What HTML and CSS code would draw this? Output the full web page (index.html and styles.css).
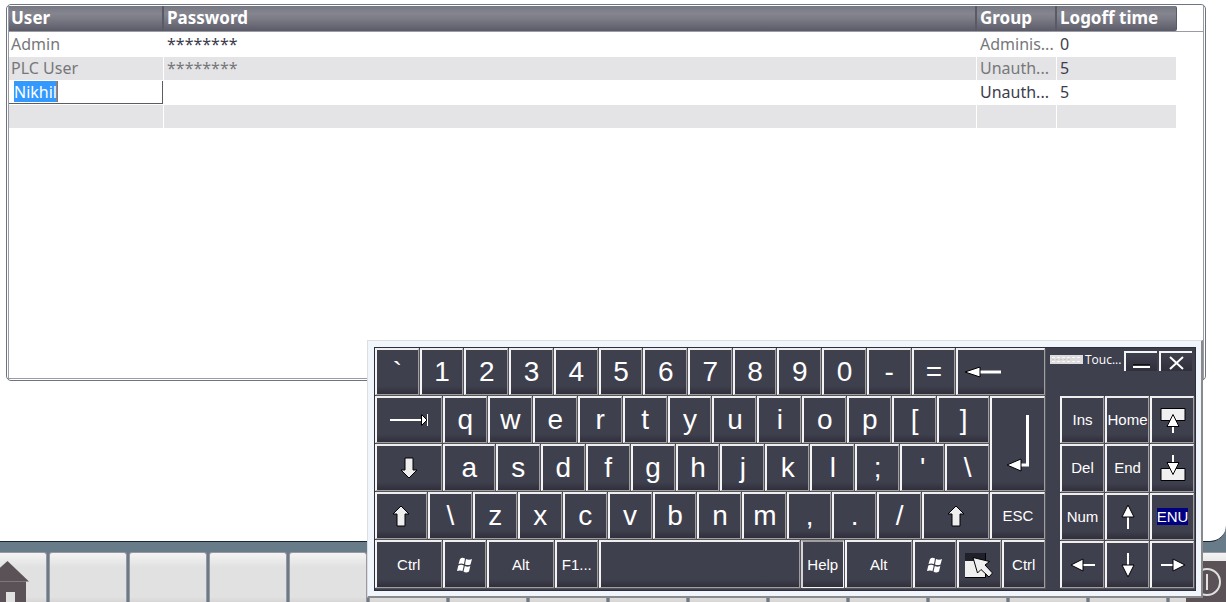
FILE: index.html
```html
<!DOCTYPE html>
<html lang="en">
<head>
<meta charset="utf-8">
<title>User administration</title>
<link rel="stylesheet" href="styles.css">
</head>
<body>
<main class="screen">
  <section class="panel" aria-label="Users">
    <div class="pane">
    <table class="users">
      <colgroup><col class="c-user"><col><col class="c-group"><col class="c-time"></colgroup>
      <thead><tr><th>User</th><th>Password</th><th>Group</th><th>Logoff time</th></tr></thead>
      <tbody>
        <tr class="muted"><td>Admin</td><td class="dark">********</td><td>Adminis...</td><td class="dark">0</td></tr>
        <tr class="muted alt"><td>PLC User</td><td>********</td><td>Unauth...</td><td class="dark">5</td></tr>
        <tr><td class="editing"><div class="edit" contenteditable="true" role="textbox" aria-label="User name"><span class="selected">Nikhil</span></div></td><td></td><td>Unauth...</td><td>5</td></tr>
        <tr class="alt"><td></td><td></td><td></td><td></td></tr>
      </tbody>
    </table>
    </div>
  </section>
</main>

<nav class="taskbar" aria-label="Screens">
  <button class="task first" aria-label="Home"><svg width="76" height="49" viewBox="0 0 76 49"><path d="M15 28.500 37.500 8 59 28.500Z" fill="#5a5256"/><path d="M18 28H56V49H18Z" fill="#5a5256"/><path d="M18 28.500H56" stroke="#7d777a"/><path d="M36 39H45V49H36Z" fill="#e1e1e1"/></svg></button>
  <button class="task" aria-label="Screen 2"></button><button class="task" aria-label="Screen 3"></button><button class="task" aria-label="Screen 4"></button><button class="task" aria-label="Screen 5"></button><button class="task" aria-label="Screen 6"></button><button class="task" aria-label="Screen 7"></button><button class="task" aria-label="Screen 8"></button><button class="task" aria-label="Screen 9"></button><button class="task" aria-label="Screen 10"></button><button class="task" aria-label="Screen 11"></button><button class="task" aria-label="Screen 12"></button><button class="task" aria-label="Screen 13"></button><button class="task" aria-label="Screen 14"></button><button class="task" aria-label="Screen 15"></button>
  <button class="task" aria-label="Exit"><svg width="76" height="49" viewBox="0 0 76 49"><path d="M16 8H60V49H16Z" fill="#5a5256"/><circle cx="37" cy="29" r="13" fill="none" stroke="#e1e1e1" stroke-width="2"/><path d="M37 21V37" stroke="#e1e1e1" stroke-width="2"/></svg></button>
</nav>

<svg class="defs" aria-hidden="true">
  <symbol id="shift" viewBox="0 0 18 22"><path d="M9 1 17 9H13V21H5V9H1Z" fill="#eee" stroke="#000"/></symbol>
  <symbol id="win" viewBox="0 0 16 16"><path d="M3 2Q5 0 8 1.500L7 7Q4 6 1.500 7ZM9 2Q12 3.500 15 2L13.500 7.500Q11 8.500 8 7.500ZM1.300 8.500Q4 7 6.800 8.500L5.500 14Q3 13 0 14ZM7.800 9Q10.500 10.500 13.300 9L12 14.500Q9 16.500 6.500 14.500Z" fill="#fff"/></symbol>
  <symbol id="arrow" viewBox="0 0 26 14"><path d="M11 7H25" stroke="#fff" stroke-width="2"/><path d="M1 7 13 1V13Z" fill="#fff" stroke="#000"/></symbol>
</svg>

<section class="keyboard" aria-label="Touch keyboard">
  <div class="board">
    <div class="keys">
      <div class="row">
        <button class="key">`</button><button class="key">1</button><button class="key">2</button><button class="key">3</button><button class="key">4</button><button class="key">5</button><button class="key">6</button><button class="key">7</button><button class="key">8</button><button class="key">9</button><button class="key">0</button><button class="key">-</button><button class="key">=</button>
        <button class="key back" aria-label="Backspace"><svg width="38" height="14" viewBox="0 0 38 14"><path d="M14 7H37" stroke="#fff" stroke-width="3"/><path d="M1 7 16 2V12Z" fill="#fff" stroke="#000"/></svg></button>
      </div>
      <div class="double">
        <div class="stack">
          <div class="row">
            <button class="key wide" aria-label="Tab"><svg width="40" height="14" viewBox="0 0 40 14"><path d="M1 7H34" stroke="#fff" stroke-width="2"/><path d="M32.500 1.500 38 7 32.500 12.500Z" fill="#fff" stroke="#000"/><path d="M38.500 1V13" stroke="#fff"/></svg></button>
            <button class="key">q</button><button class="key">w</button><button class="key">e</button><button class="key">r</button><button class="key">t</button><button class="key">y</button><button class="key">u</button><button class="key">i</button><button class="key">o</button><button class="key">p</button><button class="key">[</button><button class="key medium">]</button>
          </div>
          <div class="row">
            <button class="key wide" aria-label="Caps Lock"><svg width="18" height="22" transform="rotate(180)"><use href="#shift"/></svg></button>
            <button class="key medium">a</button><button class="key">s</button><button class="key">d</button><button class="key">f</button><button class="key">g</button><button class="key">h</button><button class="key">j</button><button class="key">k</button><button class="key">l</button><button class="key">;</button><button class="key">'</button><button class="key">\</button>
          </div>
        </div>
        <button class="key enter" aria-label="Enter"><svg width="24" height="60" viewBox="0 0 24 60"><path d="M13 51H21.500V1" fill="none" stroke="#fff" stroke-width="3"/><path d="M1 51 15 45V57Z" fill="#fff" stroke="#000"/></svg></button>
      </div>
      <div class="row">
        <button class="key medium" aria-label="Left Shift"><svg width="18" height="22"><use href="#shift"/></svg></button>
        <button class="key">\</button><button class="key">z</button><button class="key">x</button><button class="key">c</button><button class="key">v</button><button class="key">b</button><button class="key">n</button><button class="key">m</button><button class="key">,</button><button class="key">.</button><button class="key">/</button>
        <button class="key wide" aria-label="Right Shift"><svg width="18" height="22"><use href="#shift"/></svg></button>
        <button class="key small enter">ESC</button>
      </div>
      <div class="row bottom">
        <button class="key small wide">Ctrl</button><button class="key" aria-label="Windows"><svg width="16" height="16"><use href="#win"/></svg></button><button class="key small wide">Alt</button><button class="key small">F1...</button><button class="key space" aria-label="Space"></button><button class="key small pressed">Help</button><button class="key small wide">Alt</button><button class="key" aria-label="Windows"><svg width="16" height="16"><use href="#win"/></svg></button>
        <button class="key" aria-label="Context menu"><svg width="30" height="28" viewBox="0 0 30 28"><path d="M1 2H22V10H1Z" fill="#20202d"/><path d="M1 10H21V26H1Z" fill="#f0f0f0"/><path d="M21.500 2V26.500H1" fill="none" stroke="#000"/><path d="M9 6.500 25.500 10.500 21 14 28.500 22 25 26 17 18.500 13.500 22Z" fill="#f0f0f0" stroke="#000"/></svg></button>
        <button class="key small">Ctrl</button>
      </div>
    </div>
    <div class="side">
      <header class="title">
        <svg width="33" height="9" viewBox="0 0 33 9"><path d="M0 0H33V9H0Z" fill="#ddd"/><path d="M2 2.500H31M2 6.500H31" stroke="#f8f8f8" stroke-dasharray="3 2"/><path d="M2 4.500H20" stroke="#c8c8c8" stroke-dasharray="2 2"/></svg>
        <span class="name">Touc...</span>
        <button class="ctl" aria-label="Minimize"><svg width="20" height="18" viewBox="0 0 20 18"><path d="M1 11.500H18" stroke="#111"/><path d="M1 14H18" stroke="#fff" stroke-width="2"/></svg></button>
        <button class="ctl" aria-label="Close"><svg width="20" height="18" viewBox="0 0 20 18"><path d="M3 4 16 16M16 4 3 16" stroke="#fff" stroke-width="2"/></svg></button>
      </header>
      <div class="pad">
        <button class="key small">Ins</button><button class="key small">Home</button>
        <button class="key" aria-label="Page Up"><svg width="26" height="28" viewBox="0 0 26 28"><path d="M1 2.500H25V14.500H1Z" fill="#f0f0f0" stroke="#000"/><path d="M13 19V27" stroke="#fff" stroke-width="2"/><path d="M13 8.500 19 20.500H7Z" fill="#fff" stroke="#000"/></svg></button>
        <button class="key small">Del</button><button class="key small">End</button>
        <button class="key" aria-label="Page Down"><svg width="26" height="28" viewBox="0 0 26 28"><path d="M1 14.500H25V26.500H1Z" fill="#f0f0f0" stroke="#000"/><path d="M13 1V9" stroke="#fff" stroke-width="2"/><path d="M13 20.500 19 8.500H7Z" fill="#fff" stroke="#000"/></svg></button>
        <button class="key small">Num</button>
        <button class="key" aria-label="Up"><svg width="26" height="26" viewBox="0 0 26 26"><use href="#arrow" width="26" height="14" y="6" transform="rotate(90 13 13)"/></svg></button>
        <button class="key small"><span class="lang">ENU</span></button>
        <button class="key" aria-label="Left"><svg width="26" height="14"><use href="#arrow"/></svg></button>
        <button class="key" aria-label="Down"><svg width="26" height="26" viewBox="0 0 26 26"><use href="#arrow" width="26" height="14" y="6" transform="rotate(-90 13 13)"/></svg></button>
        <button class="key" aria-label="Right"><svg width="26" height="14" viewBox="0 0 26 14"><use href="#arrow" width="26" height="14" transform="rotate(180 13 7)"/></svg></button>
      </div>
    </div>
  </div>
</section>
</body>
</html>
```
FILE: styles.css
```css
* { box-sizing: border-box; }
body {
  margin: 0;
  height: 100vh;
  display: flex;
  flex-direction: column;
  overflow: hidden;
  position: relative;
  background: #677b89;
  font-family: "Noto Sans", sans-serif;
}
button { font: inherit; padding: 0; }
svg { display: block; flex: none; }
.defs { position: absolute; width: 0; height: 0; }

.screen {
  flex: 1;
  padding: 4px 20px 0 6px;
  background: #fff;
  border-bottom: 1px solid #1d2433;
  border-radius: 0 0 16px 0;
}
.panel {
  display: flex;
  min-height: 377px;
  padding: 1px;
  border: 1px solid #6e7582;
  border-radius: 5px;
}
.pane {
  flex: 1;
  padding-right: 26px;
  border: 1px solid #9a9ba5;
  border-top: 0;
  background: linear-gradient(#9a9ba5, #9a9ba5) 0 25px / 100% 1px no-repeat;
}
.users {
  width: 100%;
  table-layout: fixed;
  border-collapse: separate;
  border-spacing: 0;
  font-size: 16px;
  line-height: 24px;
  color: #3c3c4c;
}
.c-user { width: 155px; }
.c-group { width: 80px; }
.c-time { width: 120px; }
.users th {
  height: 25px;
  padding: 0 3px 2px;
  text-align: left;
  font-size: 17px;
  line-height: 23px;
  white-space: nowrap;
  color: #fff;
  border-right: 2px solid #5a5966;
  background: linear-gradient(#777782, #85858f 30%, #7c7c87 50%, #5b5a67);
}
.users th:last-child { border-right-width: 1px; border-radius: 0 2px 2px 0; }
.users th:first-child, .users td:first-child { padding-left: 2px; }
.users td {
  height: 24px;
  padding: 0 3px;
  white-space: nowrap;
  border-right: 1px solid #fff;
}
.users tbody::before { content: ""; display: block; height: 1px; }
.alt td { background: #e4e4e6; border-top: 1px solid #fff; line-height: 23px; }
.muted { color: #77777a; }
.muted .dark { color: #3c3c4c; }
.users td.editing { padding: 0; }
.edit {
  height: 23px;
  padding-left: 5px;
  line-height: 22px;
  border-right: 1px solid #5d5c63;
  border-bottom: 1px solid #5d5c63;
  outline: none;
}
.selected {
  display: inline-block;
  height: 21px;
  color: #fff;
  background: #3399ff;
  border-right: 1px solid #cc6600;
}

.taskbar {
  flex: none;
  display: flex;
  gap: 2px;
  height: 60px;
  padding-top: 10px;
  overflow: hidden;
}
.task {
  flex: 0 0 78px;
  border: 1px solid #9a97a3;
  border-bottom: 0;
  border-radius: 3px 3px 0 0;
  background: linear-gradient(#f4f4f4, #e1e1e1 14px, #e1e1e1 44px, #d8d5d5);
}
.task.first { margin-left: -31px; }

.keyboard {
  position: absolute;
  right: 23px;
  bottom: 4px;
  width: 836px;
  padding: 6px 5px 5px 6px;
  background: #f1f6fc;
  border: solid;
  border-width: 1px 2px 2px 1px;
  border-color: #dedede #8a8a8a #8a8a8a #dedede;
  font-family: "Liberation Sans", Arial, sans-serif;
}
.board {
  display: flex;
  gap: 4px;
  padding-bottom: 1px;
  border: 1px solid #2e2e3c;
  background: #3f404e;
}
.keys { flex: 1; display: flex; flex-direction: column; }
.row { display: flex; height: 48px; }
.row.bottom { height: 49px; }
.double { display: flex; }
.stack { flex: 1 1 0; min-width: 0; }
.key {
  flex: 1 1 43px;
  min-width: 0;
  margin: 0 1px 1px 0;
  display: flex;
  align-items: center;
  justify-content: center;
  border: solid;
  border-width: 2px 1px 1px 2px;
  border-color: #eee #a09e9e #a09e9e #f4f4f4;
  box-shadow: 1px 1px 0 #55545c;
  background: linear-gradient(#3f404e calc(100% - 8px), #302f3c);
  color: #fff;
  font-size: 28px;
  line-height: 32px;
}
.small { font-size: 15px; line-height: 18px; }
.pressed { border-color: #a09e9e #f4f4f4 #f4f4f4 #d4d4d4; }
.medium { flex-basis: 51px; }
.wide { flex-basis: 66px; }
.back { flex-basis: 88px; justify-content: flex-start; padding-left: 6px; }
.space { flex-basis: 200px; }
.enter { flex: none; width: 55px; }

.side { width: 145px; display: flex; flex-direction: column; }
.title {
  display: flex;
  height: 48px;
  gap: 2px;
  padding: 3px 3px 0 0;
}
.title > svg { margin-top: 4px; }
.name {
  flex: 1;
  color: #fff;
  font-family: "Open Sans", sans-serif;
  font-size: 12px;
  line-height: 18px;
}
.ctl {
  display: flex;
  justify-content: center;
  width: 33px;
  height: 20px;
  border: solid #f4f4f4;
  border-width: 2px 0 0 2px;
  background: linear-gradient(#3f404e, #302f3c);
}
.pad {
  flex: 1;
  display: grid;
  grid-template-columns: repeat(3, 1fr);
  grid-template-rows: repeat(4, 1fr);
  padding-left: 10px;
}
.lang { background: #000080; line-height: 17px; }
```
